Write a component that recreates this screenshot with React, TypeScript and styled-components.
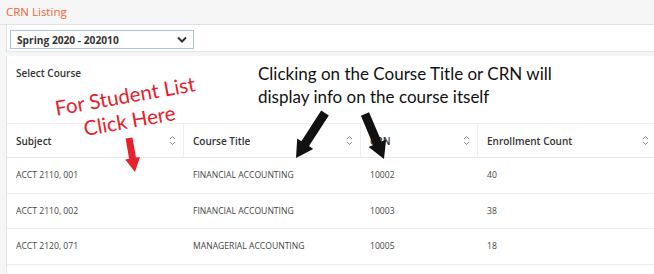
import React from "react";
import styled, { createGlobalStyle } from "styled-components";

const GlobalStyle = createGlobalStyle`
* {
  box-sizing: border-box;
}
body {
  margin: 0;
  padding: 0;
  background: #f6f6f6;
  font-family: "Open Sans", "Liberation Sans", sans-serif;
}
`;

const Page = styled.div`
  position: relative;
  width: 654px;
  height: 274px;
  overflow: hidden;
  background: #f6f6f6;
`;

const TitleBar = styled.div`
  height: 25px;
  padding: 4px 0 0 6px;
  font-size: 11.5px;
  color: #f0643c;
  border-bottom: 1px solid #e2e2e2;
`;

const Body = styled.div`
  margin-left: 6px;
  display: flex;
  flex-direction: column;
  gap: 4px;
`;

const Panel = styled.div<{ open?: boolean }>`
  background: #fff;
  border-left: 1px solid #e4e4e4;
  border-bottom: ${({ open }) => (open ? "none" : "1px solid #e6e6e6")};
  padding-bottom: ${({ open }) => (open ? "30px" : "0")};
`;

const TermRow = styled.div`
  padding: 5px 3px 2px;
  height: 26px;
`;

const TermSelect = styled.div`
  width: 184px;
  height: 19px;
  border: 1px solid #a9c3ea;
  display: flex;
  align-items: center;
  justify-content: space-between;
  padding: 0 6px 0 6px;
  font-size: 10.2px;
  font-weight: 700;
  color: #333;
`;

const SectionLabel = styled.div`
  padding: 10px 0 0 9px;
  height: 67px;
  font-size: 10px;
  font-weight: 600;
  color: #333;
`;

const Table = styled.div`
  display: grid;
  grid-template-columns: 177px 177px 117px 1fr;
`;

const HeadCell = styled.div<{ last?: boolean }>`
  height: 35px;
  border-top: 1px solid #eeeeee;
  border-bottom: 1px solid #e8e8e8;
  border-right: ${({ last }) => (last ? "none" : "1px solid #eeeeee")};
  display: flex;
  align-items: center;
  justify-content: space-between;
  padding: 0 ${({ last }) => (last ? "5px" : "7px")} 0 9px;
  font-size: 10px;
  font-weight: 600;
  color: #333;
`;

const Cell = styled.div`
  height: 35.5px;
  border-bottom: 1px solid #ececec;
  display: flex;
  align-items: center;
  padding-left: 9px;
  font-size: 8.6px;
  color: #444;
`;

const Overlay = styled.svg`
  position: absolute;
  left: 0;
  top: 0;
  pointer-events: none;
`;

const Note = styled.div<{ rotate?: number }>`
  position: absolute;
  font-family: "Lato", "Open Sans", sans-serif;
  line-height: 1.2;
  white-space: nowrap;
  transform: rotate(${({ rotate }) => rotate || 0}deg);
  transform-origin: left top;
`;

const RedNote = styled(Note)`
  color: #e8202a;
  font-size: 20.5px;
  text-align: center;
  line-height: 1.22;
`;

const BlackNote = styled(Note)`
  color: #111;
  font-size: 17px;
  line-height: 1.35;
`;

const SortIcon = () => (
  <svg width="7" height="11" viewBox="0 0 7 11">
    <path d="M1 4 L3.5 1.5 L6 4" fill="none" stroke="#888" strokeWidth="1" />
    <path d="M1 7 L3.5 9.5 L6 7" fill="none" stroke="#888" strokeWidth="1" />
  </svg>
);

const Chevron = () => (
  <svg width="10" height="7" viewBox="0 0 10 7">
    <path d="M1 1.5 L5 5.5 L9 1.5" fill="none" stroke="#333" strokeWidth="2" />
  </svg>
);

// arrow polygon from tail to tip
const arrowPoints = (
  x1: number,
  y1: number,
  x2: number,
  y2: number,
  shaft: number,
  head: number,
  headLen: number
) => {
  const dx = x2 - x1;
  const dy = y2 - y1;
  const len = Math.hypot(dx, dy);
  const ux = dx / len;
  const uy = dy / len;
  const px = -uy;
  const py = ux;
  const bx = x2 - ux * headLen;
  const by = y2 - uy * headLen;
  const pts = [
    [x1 + (px * shaft) / 2, y1 + (py * shaft) / 2],
    [bx + (px * shaft) / 2, by + (py * shaft) / 2],
    [bx + (px * head) / 2, by + (py * head) / 2],
    [x2, y2],
    [bx - (px * head) / 2, by - (py * head) / 2],
    [bx - (px * shaft) / 2, by - (py * shaft) / 2],
    [x1 - (px * shaft) / 2, y1 - (py * shaft) / 2],
  ];
  return pts.map((p) => p.map((v) => v.toFixed(1)).join(",")).join(" ");
};

const columns = ["Subject", "Course Title", "CRN", "Enrollment Count"];

const rows = [
  ["ACCT 2110, 001", "FINANCIAL ACCOUNTING", "10002", "40"],
  ["ACCT 2110, 002", "FINANCIAL ACCOUNTING", "10003", "38"],
  ["ACCT 2120, 071", "MANAGERIAL ACCOUNTING", "10005", "18"],
];

export default function App() {
  return (
    <Page>
      <GlobalStyle />
      <TitleBar>CRN Listing</TitleBar>
      <Body>
        <Panel>
          <TermRow>
            <TermSelect>
              <span>Spring 2020 - 202010</span>
              <Chevron />
            </TermSelect>
          </TermRow>
        </Panel>
        <Panel open>
          <SectionLabel>Select Course</SectionLabel>
          <Table>
            {columns.map((c, i) => (
              <HeadCell key={c} last={i === columns.length - 1}>
                <span>{c}</span>
                <SortIcon />
              </HeadCell>
            ))}
            {rows.map((r) =>
              r.map((v, i) => <Cell key={r[0] + i}>{v}</Cell>)
            )}
          </Table>
        </Panel>
      </Body>

      <RedNote rotate={-10} style={{ left: 53, top: 96 }}>
        For Student List
        <br />
        Click Here
      </RedNote>
      <BlackNote style={{ left: 258, top: 63 }}>
        Clicking on the Course Title or CRN will
        <br />
        display info on the course itself
      </BlackNote>

      <Overlay width="654" height="274">
        <polygon points={arrowPoints(129, 138, 135, 172, 7, 15, 14)} fill="#e8202a" />
        <polygon points={arrowPoints(325, 113, 296, 158, 9, 19, 17)} fill="#111" />
        <polygon points={arrowPoints(365, 114, 384, 159, 9, 19, 17)} fill="#111" />
      </Overlay>
    </Page>
  );
}
